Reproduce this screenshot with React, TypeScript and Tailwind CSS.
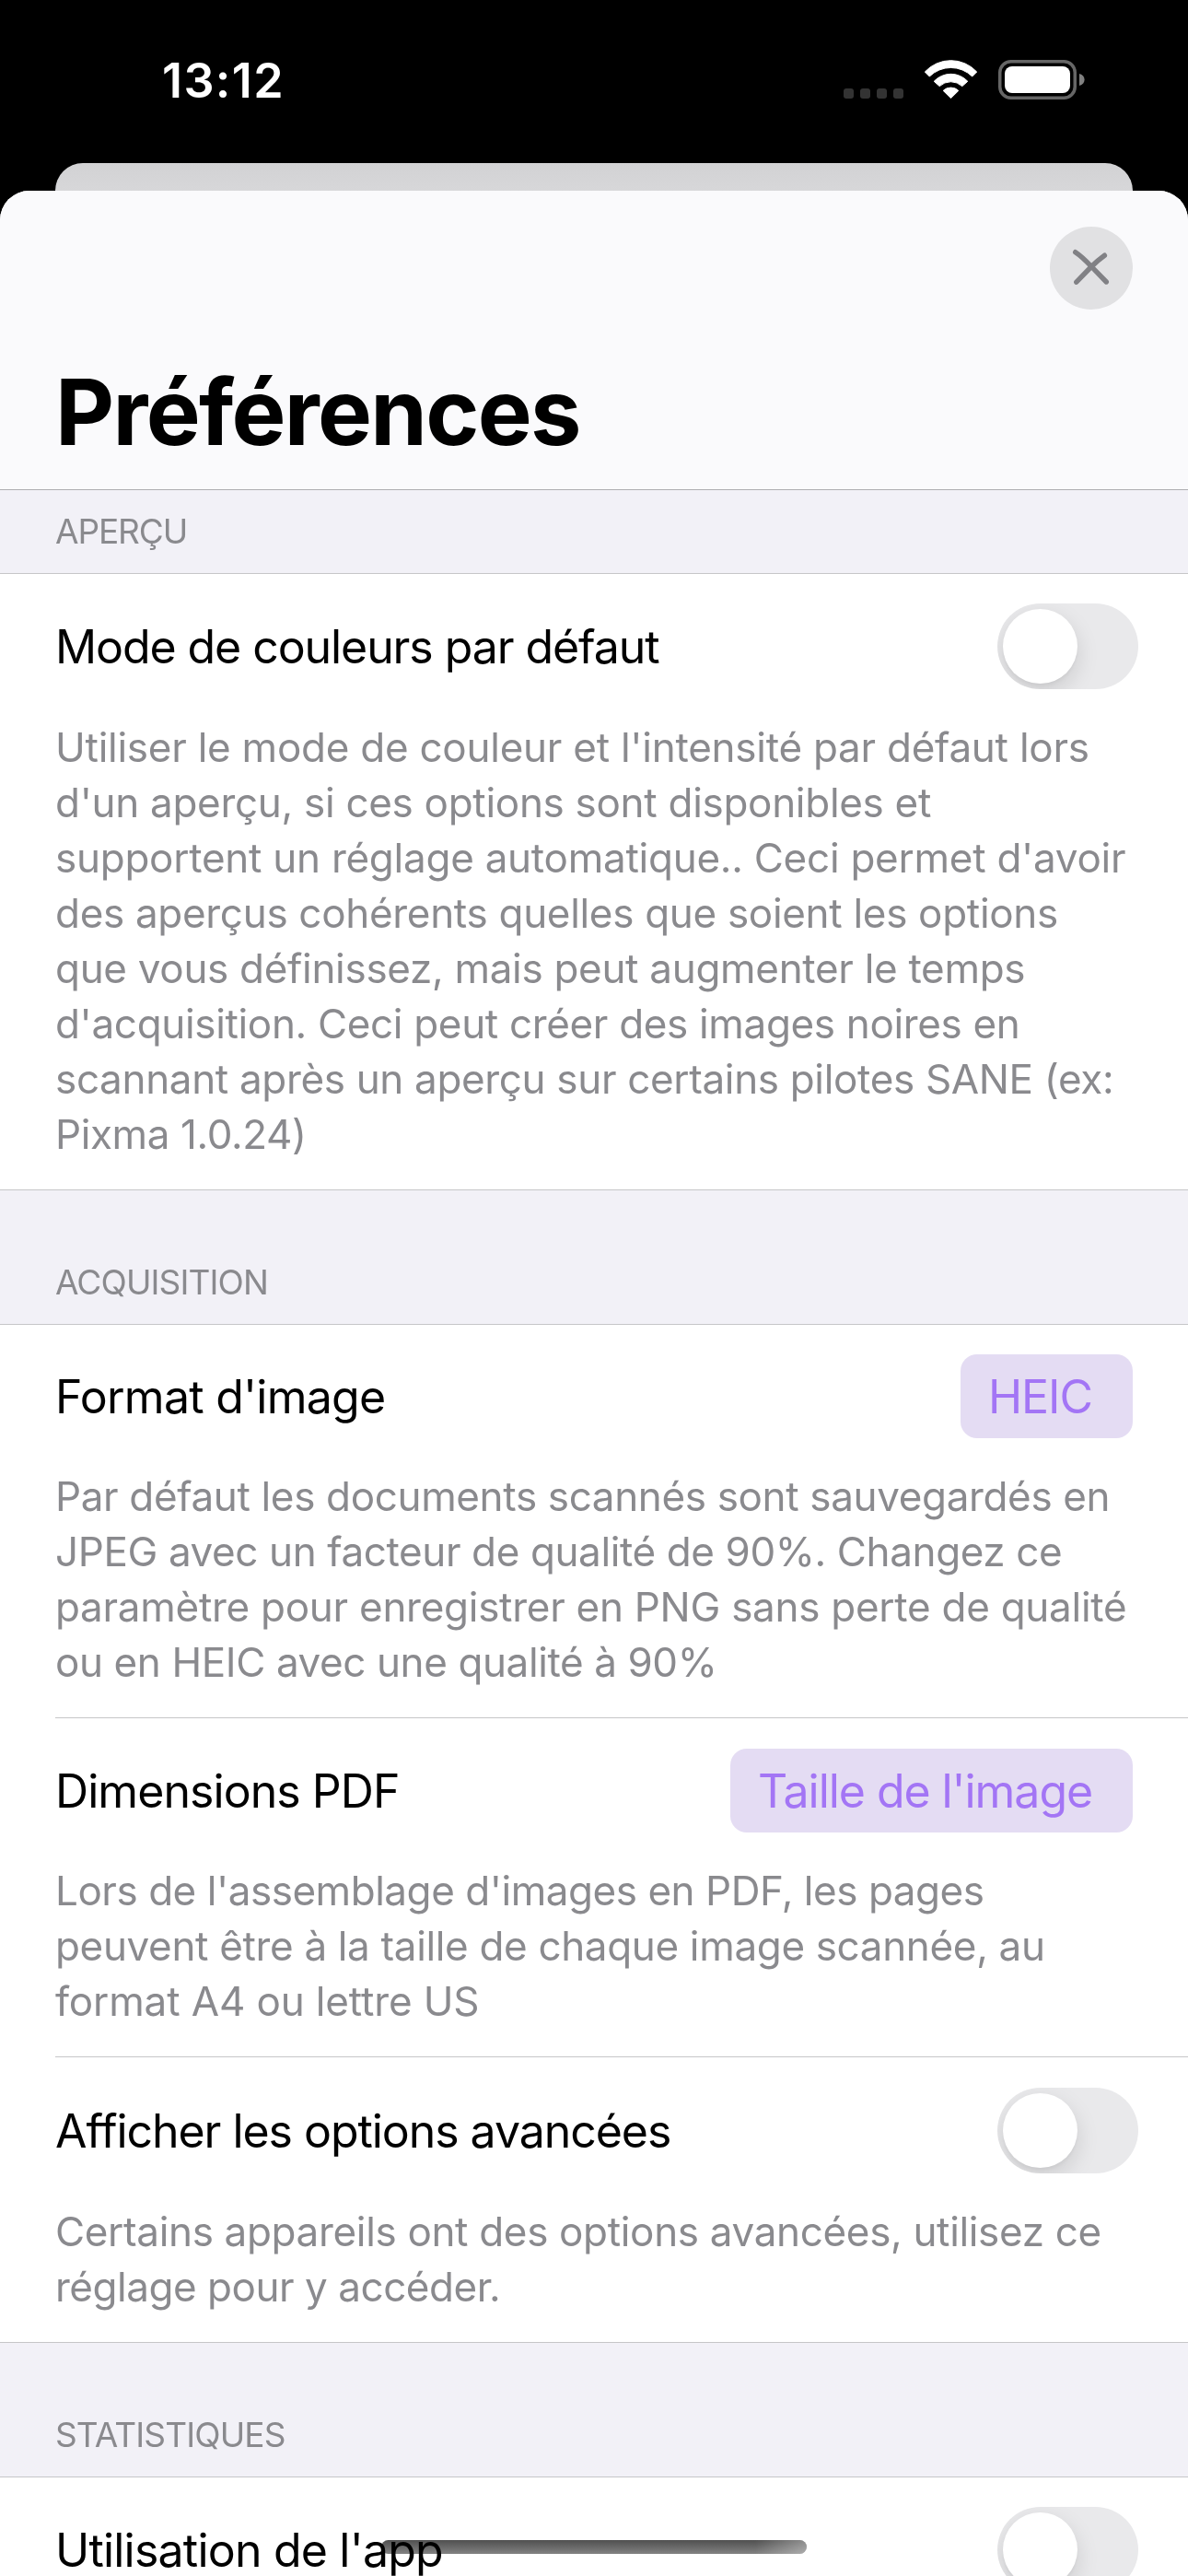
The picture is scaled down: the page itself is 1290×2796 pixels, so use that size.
import type { ReactNode } from 'react';

type TextLine = [text: string, tracking: string];

function StatusBar() {
  return (
    <div className="flex h-[177px] shrink-0 items-start justify-between pr-[112px] pl-[176px]">
      <div className="mt-14 text-[52px] leading-[64px] font-semibold tracking-[1.4px] text-white">13:12</div>
      <div className="mt-[65px] flex items-end">
        <div className="mb-px flex gap-[7px]">
          <span className="size-[11px] rounded-[3px] bg-[#333333]" />
          <span className="size-[11px] rounded-[3px] bg-[#333333]" />
          <span className="size-[11px] rounded-[3px] bg-[#333333]" />
          <span className="size-[11px] rounded-[3px] bg-[#333333]" />
        </div>
        <svg className="ml-[22px]" width="59" height="43" viewBox="0 0 59 43" fill="#fff" stroke="#fff" strokeWidth="1" strokeLinejoin="round">
          <path d="M1.3 13A38.4 38.4 0 0 1 57.7 13L52.7 18A33 33 0 0 0 6.3 18Z" />
          <path d="M11.2 23.3A25 25 0 0 1 47.8 23.3L41.8 28.6A18 18 0 0 0 17.2 28.6Z" />
          <path d="M21.2 33.4A12 12 0 0 1 37.8 33.4L29.5 41.6Z" />
        </svg>
        <svg className="ml-[22px]" width="94" height="43" viewBox="0 0 94 43">
          <rect x="1.75" y="1.75" width="81.5" height="39.5" rx="12" fill="none" stroke="#666" strokeWidth="3.5" />
          <rect x="7" y="7" width="71" height="29" rx="8" fill="#fff" />
          <path d="M88 15C91.8 16 93.6 18.6 93.6 21.5S91.8 27 88 28Z" fill="#808080" />
        </svg>
      </div>
    </div>
  );
}

function Toggle() {
  return (
    <div className="-mr-1.5 h-[93px] w-[153px] shrink-0 overflow-hidden rounded-full bg-[#e9e9eb] p-1.5">
      <div className="size-[81px] rounded-full bg-white shadow-[0_9px_24px_rgba(0,0,0,0.13),0_3px_3px_rgba(0,0,0,0.03)]" />
    </div>
  );
}

function Label({ children, className }: { children: ReactNode; className: string }) {
  return <div className={`text-[50px] leading-[60px] whitespace-nowrap text-black ${className}`}>{children}</div>;
}

function Description({ lines }: { lines: TextLine[] }) {
  return (
    <p className="mt-[33px] text-[44px] leading-[60px] whitespace-nowrap text-[#8a8a8e]">
      {lines.map(([text, tracking]) => (
        <span key={text} className={`block ${tracking}`}>
          {text}
        </span>
      ))}
    </p>
  );
}

function Row({ children, className }: { children: ReactNode; className: string }) {
  return <div className={`ml-[60px] pr-[60px] pb-[30px] ${className}`}>{children}</div>;
}

function RowHeader({ children }: { children: ReactNode }) {
  return <div className="flex items-center justify-between">{children}</div>;
}

function SectionTitle({ children, className }: { children: ReactNode; className: string }) {
  return (
    <h2 className={`flex items-end border-b border-[#c6c6c8] bg-[#f2f1f7] pb-[25px] pl-[60px] text-[37px] leading-10 text-[#8a8a8e] ${className}`}>
      {children}
    </h2>
  );
}

export default function App() {
  return (
    <div className="relative flex h-[2796px] w-[1290px] flex-col overflow-hidden bg-black font-['Inter',sans-serif]">
      <StatusBar />
      <div className="mx-[60px] h-[30px] shrink-0 rounded-t-[30px] bg-linear-to-b from-[#d2d2d4] to-[#d7d7d9]" />
      <div className="flex-1 overflow-hidden rounded-t-[32px] bg-white">
        <header className="h-[325px] border-b border-[#adadb1] bg-[#fafafc] px-[60px] pt-[39px]">
          <button className="ml-auto block size-[90px] rounded-full bg-[#e1e1e3]" aria-label="Fermer">
            <svg width="90" height="90" viewBox="0 0 90 90" fill="none" stroke="#818185" strokeWidth="5.4" strokeLinecap="round">
              <path d="M27.7 27.7Q35 32.5 45.3 43.5L61.3 60" />
              <path d="M59.4 31.2Q52 36.5 45 43.5L28.8 60.2" />
            </svg>
          </button>
          <h1 className="mt-[51px] text-[99px] leading-[120px] font-bold tracking-[-1.7px] text-black">Préférences</h1>
        </header>

        <SectionTitle className="h-[91px] tracking-[-1.1px]">APERÇU</SectionTitle>
        <section className="border-b border-[#c6c6c8]">
          <Row className="pt-8">
            <RowHeader>
              <Label className="tracking-[-1.08px]">Mode de couleurs par défaut</Label>
              <Toggle />
            </RowHeader>
            <Description
              lines={[
                ["Utiliser le mode de couleur et l'intensité par défaut lors", 'tracking-[-0.25px]'],
                ["d'un aperçu, si ces options sont disponibles et", 'tracking-[-0.295px]'],
                ["supportent un réglage automatique.. Ceci permet d'avoir", 'tracking-[-0.26px]'],
                ['des aperçus cohérents quelles que soient les options', 'tracking-[-0.31px]'],
                ['que vous définissez, mais peut augmenter le temps', 'tracking-[-0.305px]'],
                ["d'acquisition. Ceci peut créer des images noires en", 'tracking-[-0.335px]'],
                ['scannant après un aperçu sur certains pilotes SANE (ex:', 'tracking-[-0.337px]'],
                ['Pixma 1.0.24)', 'tracking-[-0.4px]'],
              ]}
            />
          </Row>
        </section>

        <SectionTitle className="h-[146px] tracking-[-0.89px]">ACQUISITION</SectionTitle>
        <section className="border-b border-[#c6c6c8]">
          <Row className="border-b border-[#c6c6c8] pt-8">
            <RowHeader>
              <Label className="tracking-[-0.75px]">Format d'image</Label>
              <button className="h-[91px] w-[187px] rounded-[18px] bg-[#e4dcf3] pl-[30px] text-left text-[50px] leading-[60px] tracking-[-1.08px] whitespace-nowrap text-[#a375f5]">
                HEIC
              </button>
            </RowHeader>
            <Description
              lines={[
                ['Par défaut les documents scannés sont sauvegardés en', 'tracking-[-0.352px]'],
                ['JPEG avec un facteur de qualité de 90%. Changez ce', 'tracking-[-0.393px]'],
                ['paramètre pour enregistrer en PNG sans perte de qualité', 'tracking-[-0.272px]'],
                ['ou en HEIC avec une qualité à 90%', 'tracking-[-0.4px]'],
              ]}
            />
          </Row>
          <Row className="border-b border-[#c6c6c8] pt-[33px]">
            <RowHeader>
              <Label className="tracking-[-0.937px]">Dimensions PDF</Label>
              <button className="h-[91px] w-[437px] rounded-[18px] bg-[#e4dcf3] pl-[30px] text-left text-[50px] leading-[60px] tracking-[-1.05px] whitespace-nowrap text-[#a375f5]">
                Taille de l'image
              </button>
            </RowHeader>
            <Description
              lines={[
                ["Lors de l'assemblage d'images en PDF, les pages", 'tracking-[-0.46px]'],
                ['peuvent être à la taille de chaque image scannée, au', 'tracking-[-0.34px]'],
                ['format A4 ou lettre US', 'tracking-[-0.14px]'],
              ]}
            />
          </Row>
          <Row className="pt-[33px]">
            <RowHeader>
              <Label className="tracking-[-1.046px]">Afficher les options avancées</Label>
              <Toggle />
            </RowHeader>
            <Description
              lines={[
                ['Certains appareils ont des options avancées, utilisez ce', 'tracking-[-0.334px]'],
                ['réglage pour y accéder.', 'tracking-[-0.467px]'],
              ]}
            />
          </Row>
        </section>

        <SectionTitle className="h-[146px] tracking-[-0.87px]">STATISTIQUES</SectionTitle>
        <Row className="pt-8">
          <RowHeader>
            <Label className="tracking-[-0.792px]">Utilisation de l'app</Label>
            <Toggle />
          </RowHeader>
        </Row>
      </div>

      {/* Home indicator floating over the list */}
      <div className="absolute bottom-6 left-[414px] h-[15px] w-[462px] rounded-full bg-linear-to-b from-[#505050] to-[#828282] mix-blend-multiply">
        <div className="ml-auto h-full w-14 rounded-r-full bg-linear-to-r from-transparent to-white/35" />
      </div>
    </div>
  );
}
